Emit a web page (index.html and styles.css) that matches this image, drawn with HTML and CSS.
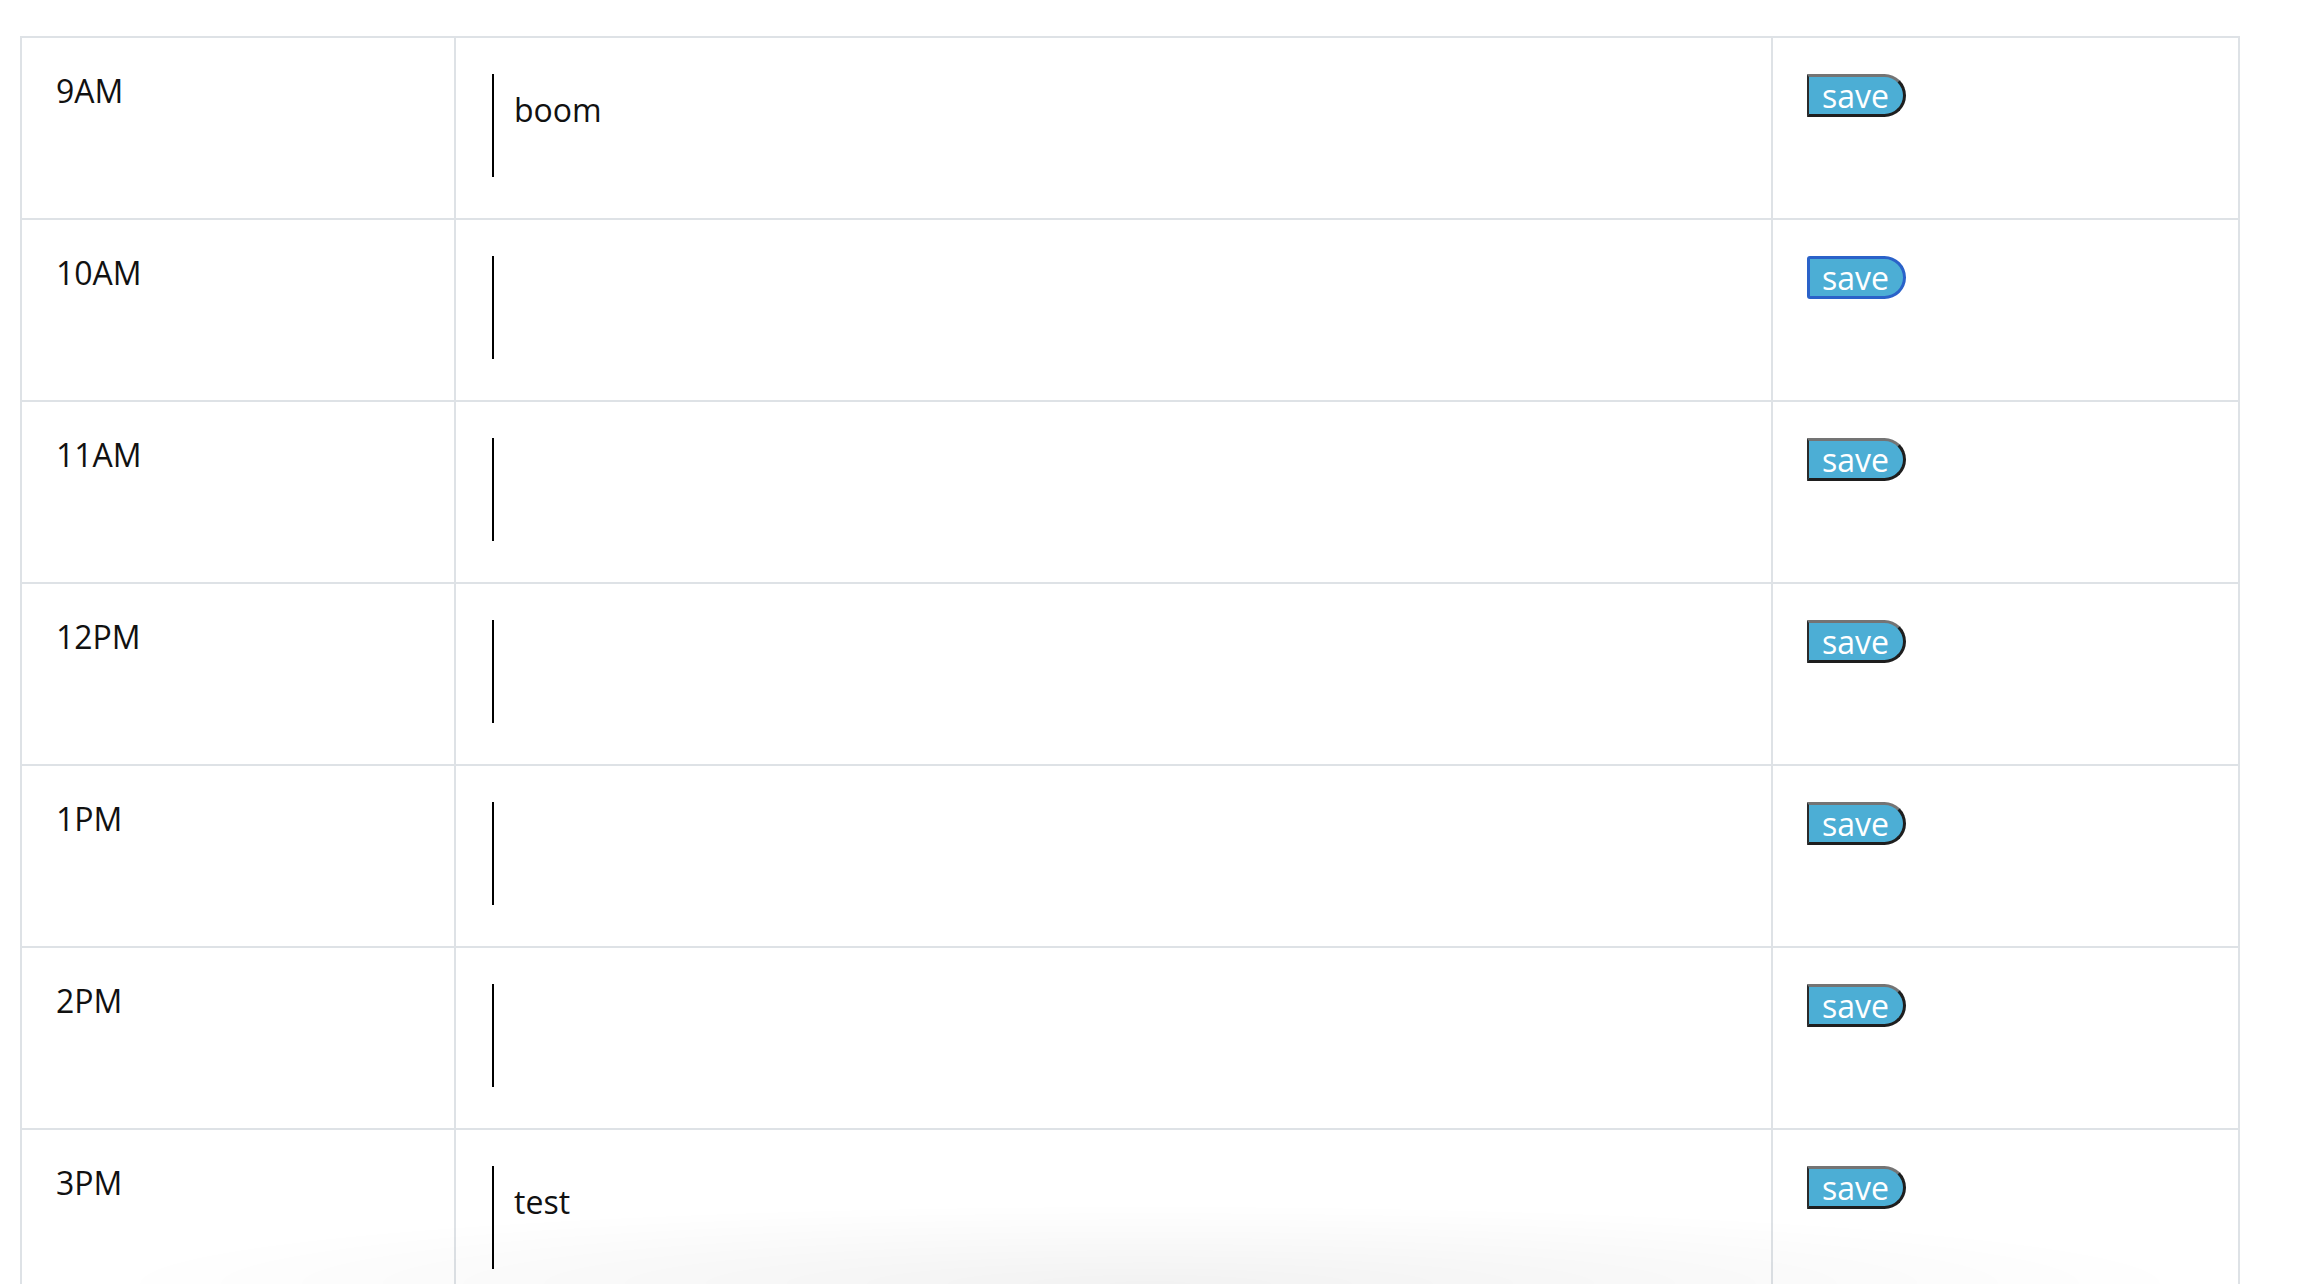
FILE: index.html
```html
<!DOCTYPE html>
<html lang="en">
<head>
<meta charset="utf-8">
<title>Work Day Scheduler</title>
<link rel="stylesheet" href="styles.css">
</head>
<body>
<main class="planner">
  <div class="row">
    <div class="hour">9AM</div>
    <div class="desc-cell"><textarea class="desc">boom</textarea></div>
    <div class="save-cell"><button class="save-btn">save</button></div>
  </div>
  <div class="row">
    <div class="hour">10AM</div>
    <div class="desc-cell"><textarea class="desc"></textarea></div>
    <div class="save-cell"><button class="save-btn focused">save</button></div>
  </div>
  <div class="row">
    <div class="hour">11AM</div>
    <div class="desc-cell"><textarea class="desc"></textarea></div>
    <div class="save-cell"><button class="save-btn">save</button></div>
  </div>
  <div class="row">
    <div class="hour">12PM</div>
    <div class="desc-cell"><textarea class="desc"></textarea></div>
    <div class="save-cell"><button class="save-btn">save</button></div>
  </div>
  <div class="row">
    <div class="hour">1PM</div>
    <div class="desc-cell"><textarea class="desc"></textarea></div>
    <div class="save-cell"><button class="save-btn">save</button></div>
  </div>
  <div class="row">
    <div class="hour">2PM</div>
    <div class="desc-cell"><textarea class="desc"></textarea></div>
    <div class="save-cell"><button class="save-btn">save</button></div>
  </div>
  <div class="row">
    <div class="hour">3PM</div>
    <div class="desc-cell"><textarea class="desc">test</textarea></div>
    <div class="save-cell"><button class="save-btn">save</button></div>
  </div>
</main>
<div class="bottom-shade"></div>
</body>
</html>
```
FILE: styles.css
```css
html, body {
  margin: 0;
  padding: 0;
  background: #ffffff;
}

body {
  font-family: "Open Sans", "Noto Sans", "Liberation Sans", sans-serif;
  color: #111111;
  height: 100vh;
  overflow: hidden;
}

.planner {
  box-sizing: border-box;
  margin: 36px 0 0 20px;
  width: 2220px;
  border-top: 2px solid #dee2e6;
  border-left: 2px solid #dee2e6;
  border-right: 2px solid #dee2e6;
}

.row {
  box-sizing: border-box;
  display: grid;
  grid-template-columns: 432px 1317px 1fr;
  height: 182px;
  border-bottom: 2px solid #dee2e6;
}

.hour {
  padding: 29px 0 0 34px;
  font-size: 32px;
  line-height: 48px;
}

.desc-cell {
  border-left: 2px solid #dee2e6;
  padding: 36px 0 0 36px;
}

.desc {
  box-sizing: border-box;
  display: block;
  width: 1240px;
  height: 103px;
  margin: 0;
  padding: 12px 0 0 20px;
  border: none;
  border-left: 2px solid #000000;
  background: transparent;
  resize: none;
  outline: none;
  font-family: "Open Sans", "Noto Sans", "Liberation Sans", sans-serif;
  font-size: 32px;
  line-height: 48px;
  color: #111111;
  overflow: hidden;
}

.save-cell {
  border-left: 2px solid #dee2e6;
  padding: 36px 0 0 34px;
}

.save-btn {
  box-sizing: border-box;
  display: block;
  width: 99px;
  height: 43px;
  margin: 0;
  padding: 0 0 0 13px;
  text-align: left;
  background: #4caed5;
  color: #ffffff;
  font-family: "Open Sans", "Noto Sans", "Liberation Sans", sans-serif;
  font-size: 32px;
  line-height: 37px;
  border-style: solid;
  border-width: 3px 3px 3px 2px;
  border-color: #747474 #1e1e1e #1e1e1e #2a2a2a;
  border-radius: 0 22px 22px 0;
  cursor: pointer;
}

.save-btn.focused {
  border-width: 3px;
  border-color: #2a62c9;
  border-radius: 3px 22px 22px 3px;
  padding-left: 12px;
}

.bottom-shade {
  position: fixed;
  left: 100px;
  bottom: 0;
  width: 2100px;
  height: 80px;
  pointer-events: none;
  background: radial-gradient(ellipse 50% 100% at 50% 100%, rgba(0, 0, 0, 0.05), rgba(0, 0, 0, 0));
}
```
